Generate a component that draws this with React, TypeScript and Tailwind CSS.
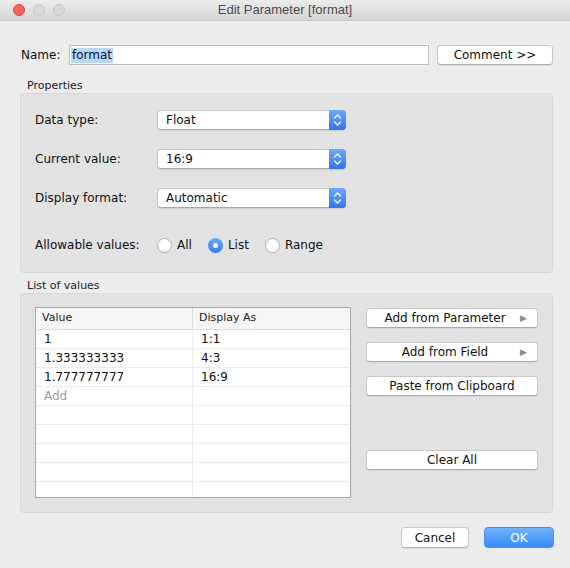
import { useState } from "react"

const font = { fontFamily: '"DejaVu Sans", "Liberation Sans", sans-serif' }

function Stepper() {
  return (
    <div className="w-[17px] h-full rounded-r-[4px] bg-gradient-to-b from-[#6fa8fc] to-[#2f72f5] flex items-center justify-center">
      <svg width="9" height="14" viewBox="0 0 9 14" fill="none" stroke="white" strokeWidth="1.4" strokeLinecap="round" strokeLinejoin="round">
        <path d="M1.5 5 L4.5 2 L7.5 5" />
        <path d="M1.5 9 L4.5 12 L7.5 9" />
      </svg>
    </div>
  )
}

function Select({ value }: { value: string }) {
  return (
    <div className="w-[189px] h-[20px] flex items-stretch bg-white rounded-[4px] border border-[#c6c6c6] border-b-[#a8a8a8] shadow-[0_1px_1px_rgba(0,0,0,0.08)]">
      <div className="flex-1 pl-[8px] text-[12px] leading-[18px] text-[#111]">{value}</div>
      <div className="-my-px -mr-px">
        <Stepper />
      </div>
    </div>
  )
}

function Radio({ label, checked, gap }: { label: string; checked?: boolean; gap: string }) {
  return (
    <div className={`flex items-center ${gap}`}>
      {checked ? (
        <div className="w-[15px] h-[15px] rounded-full bg-gradient-to-b from-[#6ba6fb] to-[#3278f5] flex items-center justify-center">
          <div className="w-[5px] h-[5px] rounded-full bg-white" />
        </div>
      ) : (
        <div className="w-[15px] h-[15px] rounded-full bg-white border border-[#acacac]" />
      )}
      <span className="ml-[5px] text-[12px] text-[#111]">{label}</span>
    </div>
  )
}

function Button({ children, className = "" }: { children: React.ReactNode; className?: string }) {
  return (
    <button
      className={`h-[20px] bg-white rounded-[4px] border border-[#c8c8c8] border-b-[#aaaaaa] shadow-[0_1px_1px_rgba(0,0,0,0.06)] text-[12px] text-[#111] leading-none flex items-center justify-center ${className}`}
    >
      {children}
    </button>
  )
}

const rows = [
  ["1", "1:1"],
  ["1.333333333", "4:3"],
  ["1.777777777", "16:9"],
]

export default function App() {
  const [allow, setAllow] = useState("List")

  return (
    <div style={font} className="w-[570px] h-[568px] bg-[#ececec] flex flex-col overflow-hidden">
      {/* title bar */}
      <div className="h-[21px] border-b border-[#c9c9c9] bg-gradient-to-b from-[#ebebeb] to-[#d6d6d6] flex items-center relative">
        <div className="flex items-center gap-[8px] pl-[13px]">
          <div className="w-[12px] h-[12px] rounded-full bg-[#fc605b] border border-[#de4a45]" />
          <div className="w-[12px] h-[12px] rounded-full bg-[#d9d9d9] border border-[#c8c8c8]" />
          <div className="w-[12px] h-[12px] rounded-full bg-[#d9d9d9] border border-[#c8c8c8]" />
        </div>
        <div
          style={{ fontFamily: '"Liberation Sans", Arial, sans-serif' }}
          className="absolute inset-0 flex items-center justify-center text-[13px] text-[#4b4b4b]"
        >
          Edit Parameter [format]
        </div>
      </div>

      {/* name row */}
      <div className="flex items-center mt-[24px] pl-[21px]">
        <span className="text-[12px] text-[#111] w-[48px]">Name:</span>
        <div className="w-[360px] h-[20px] bg-white border border-[#bdbdbd] flex items-center pl-[1px]">
          <span className="bg-[#b4d7ff] text-[12px] text-[#111] leading-[15px] px-px">format</span>
        </div>
        <Button className="ml-[8px] w-[116px]">Comment &gt;&gt;</Button>
      </div>

      {/* properties */}
      <div className="mt-[14px] pl-[27px] text-[11px] text-[#222] leading-[14px]">Properties</div>
      <div className="mx-[20px] w-[533px] h-[180px] bg-[#e2e2e2] border border-[#d8d8d8] rounded-[4px] pl-[14px] pt-[16px]">
        {[
          ["Data type:", "Float"],
          ["Current value:", "16:9"],
          ["Display format:", "Automatic"],
        ].map(([label, value]) => (
          <div key={label} className="flex items-center h-[20px] mb-[19px]">
            <span className="w-[122px] text-[12px] text-[#111]">{label}</span>
            <Select value={value} />
          </div>
        ))}
        <div className="flex items-center mt-[28px]">
          <span className="w-[122px] text-[12px] text-[#111]">Allowable values:</span>
          {["All", "List", "Range"].map((l) => (
            <div key={l} onClick={() => setAllow(l)}>
              <Radio label={l} checked={allow === l} gap={l === "Range" ? "" : "mr-[16px]"} />
            </div>
          ))}
        </div>
      </div>

      {/* list of values */}
      <div className="mt-[6px] pl-[27px] text-[11px] text-[#222] leading-[14px]">List of values</div>
      <div className="mx-[20px] w-[533px] h-[220px] bg-[#e2e2e2] border border-[#d8d8d8] rounded-[4px] pl-[14px] pt-[13px] flex">
        <div className="w-[316px] h-[191px] bg-white border border-[#a9a9a9] flex flex-col overflow-hidden">
          <div className="h-[22px] shrink-0 bg-[#f5f5f5] border-b border-[#dcdcdc] flex text-[11px] text-[#222]">
            <div className="w-[157px] border-r border-[#dcdcdc] pl-[6px] flex items-center">Value</div>
            <div className="flex-1 pl-[6px] flex items-center">Display As</div>
          </div>
          {Array.from({ length: 9 }).map((_, i) => {
            const r = rows[i]
            return (
              <div key={i} className="h-[19px] shrink-0 border-b border-[#ececec] flex text-[12px] text-[#111]">
                <div className="w-[157px] border-r border-[#ececec] pl-[8px] flex items-center">
                  {r ? r[0] : i === 3 ? <span className="text-[#9a9a9a]">Add</span> : ""}
                </div>
                <div className="flex-1 pl-[8px] flex items-center">{r ? r[1] : ""}</div>
              </div>
            )
          })}
        </div>
        <div className="ml-[15px] mt-[1px] w-[172px] flex flex-col">
          <Button className="w-full relative">
            <span className="pr-[14px]">Add from Parameter</span>
            <span className="absolute right-[10px] text-[9px] text-[#8a8a8a]">▶</span>
          </Button>
          <Button className="w-full mt-[14px] relative">
            <span className="pr-[14px]">Add from Field</span>
            <span className="absolute right-[10px] text-[9px] text-[#8a8a8a]">▶</span>
          </Button>
          <Button className="w-full mt-[14px]">Paste from Clipboard</Button>
          <Button className="w-full mt-[54px]">Clear All</Button>
        </div>
      </div>

      {/* footer */}
      <div className="flex justify-end mt-[14px] pr-[16px] gap-[15px]">
        <Button className="w-[68px] !h-[21px]">Cancel</Button>
        <button className="w-[70px] h-[21px] rounded-[4px] bg-gradient-to-b from-[#6cb3fc] to-[#3a8bf8] border border-[#4a8ff0] text-white text-[12px] leading-none">
          OK
        </button>
      </div>
    </div>
  )
}
